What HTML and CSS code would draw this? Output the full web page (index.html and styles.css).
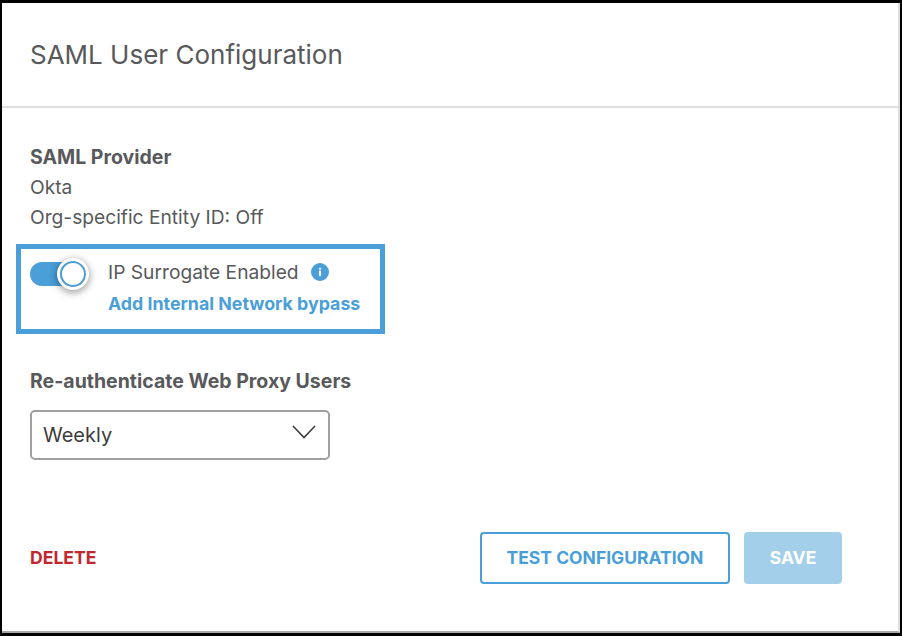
FILE: index.html
```html
<!DOCTYPE html>
<html lang="en">
<head>
  <meta charset="UTF-8">
  <title>SAML User Configuration</title>
  <link rel="stylesheet" href="styles.css">
</head>
<body>

<div class="dialog">
  <div class="dialog-header">
    <h1>SAML User Configuration</h1>
  </div>

  <div class="dialog-body">
    <h2>SAML Provider</h2>
    <p>Okta</p>
    <p>Org-specific Entity ID: Off</p>

    <div class="surrogate-box">
      <div class="toggle">
        <div class="toggle-knob"></div>
      </div>
      <div class="surrogate-text">
        <div class="surrogate-label">
          IP Surrogate Enabled
          <svg class="info-icon" width="18" height="18" viewBox="0 0 18 18">
            <circle cx="9" cy="9" r="9" fill="#4a9fd8"/>
            <rect x="8" y="7.6" width="2" height="5.6" fill="#fff"/>
            <rect x="8" y="4.8" width="2" height="1.8" fill="#fff"/>
          </svg>
        </div>
        <a class="bypass-link" href="#">Add Internal Network bypass</a>
      </div>
    </div>

    <h2 class="reauth-title">Re-authenticate Web Proxy Users</h2>
    <div class="select-box">
      <span>Weekly</span>
      <svg class="select-arrow" width="24" height="14" viewBox="0 0 24 14">
        <path d="M1 1 L12 12.5 L23 1" fill="none" stroke="#3c3c3c" stroke-width="1.6"/>
      </svg>
    </div>

    <div class="dialog-footer">
      <a class="delete-link" href="#">DELETE</a>
      <div class="footer-buttons">
        <button class="btn btn-outline">TEST CONFIGURATION</button>
        <button class="btn btn-disabled">SAVE</button>
      </div>
    </div>
  </div>
</div>

</body>
</html>
```

FILE: styles.css
```css
html, body {
  height: 100%;
}
body {
  margin: 0;
  padding: 3px 2px;
  box-sizing: border-box;
  background-color: #000;
  font-family: Inter, "Liberation Sans", Arial, sans-serif;
  color: #58595b;
}
.dialog {
  height: 100%;
  background-color: #fff;
  border-right: 2px solid #ddd;
  border-bottom: 2px solid #a8a8a8;
  box-sizing: border-box;
}
.dialog-header {
  height: 105px;
  padding: 0 28px;
  display: flex;
  align-items: center;
  border-bottom: 2px solid #ddd;
  box-sizing: border-box;
}
h1 {
  margin: 0;
  font-size: 26px;
  font-weight: 400;
}
.dialog-body {
  padding: 37px 28px 0;
}
h2 {
  margin: 0;
  font-size: 19.5px;
  line-height: 24px;
  font-weight: 700;
}
p {
  margin: 0;
  padding-top: 6px;
  font-size: 19.2px;
  line-height: 24px;
}
.surrogate-box {
  display: flex;
  width: 369px;
  height: 90px;
  margin: 15px 0 0 -14px;
  padding: 11px 0 0 9px;
  border: 5px solid #4a9fd8;
  box-sizing: border-box;
}
.toggle {
  position: relative;
  width: 48px;
  height: 24px;
  margin-top: 2px;
  border-radius: 12px;
  background-color: #4a9fd8;
}
.toggle-knob {
  position: absolute;
  left: 30px;
  top: -1px;
  width: 22px;
  height: 22px;
  border: 2px solid #4a9fd8;
  border-radius: 50%;
  outline: 3px solid #fff;
  background-color: #fff;
  box-shadow: 0 2px 7px 4px rgba(0, 0, 0, 0.35);
}
.surrogate-text {
  margin-left: 30px;
}
.surrogate-label {
  display: flex;
  align-items: center;
  gap: 12px;
  font-size: 19.2px;
  line-height: 24px;
}
.bypass-link {
  display: block;
  margin-top: 8px;
  font-size: 17.8px;
  line-height: 24px;
  font-weight: 700;
  color: #4a9fd8;
  text-decoration: none;
}
.reauth-title {
  margin-top: 35px;
}
.select-box {
  display: flex;
  justify-content: space-between;
  align-items: flex-start;
  width: 300px;
  height: 50px;
  margin-top: 17px;
  padding: 10px 12px 0 11px;
  border: 2px solid #a0a0a3;
  border-radius: 5px;
  box-sizing: border-box;
  font-size: 20px;
  line-height: 26px;
  color: #3c3c3c;
}
.select-arrow {
  margin-top: 3px;
}
.dialog-footer {
  display: flex;
  justify-content: space-between;
  align-items: center;
  width: 812px;
  margin-top: 72px;
}
.delete-link {
  padding-bottom: 2px;
  font-size: 17.6px;
  font-weight: 700;
  color: #c1272d;
  text-decoration: none;
}
.footer-buttons {
  display: flex;
  gap: 14px;
}
.btn {
  height: 52px;
  padding: 0 0 2px;
  border-radius: 4px;
  font-family: inherit;
  font-size: 17.5px;
  font-weight: 700;
}
.btn-outline {
  width: 250px;
  border: 2px solid #4a9fd8;
  background-color: #fff;
  color: #4a9fd8;
}
.btn-disabled {
  width: 98px;
  border: none;
  background-color: #a4cfea;
  color: #fff;
}
```
